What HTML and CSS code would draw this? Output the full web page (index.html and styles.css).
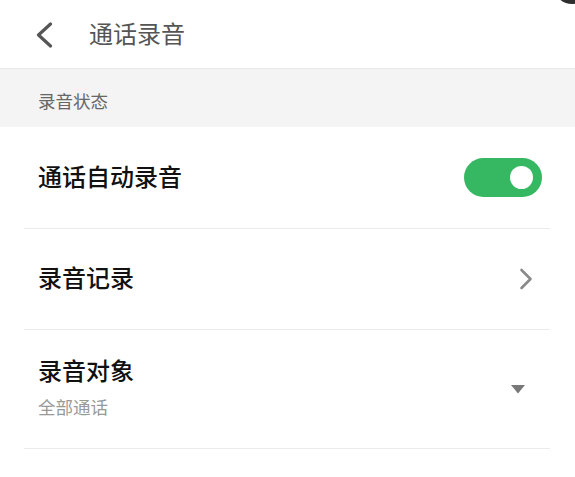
FILE: index.html
```html
<!DOCTYPE html>
<html lang="zh-CN">
<head>
<meta charset="utf-8">
<title>通话录音</title>
<link rel="stylesheet" href="styles.css">
</head>
<body>
<div class="page">
  <div class="corner-dot"></div>
  <header class="topbar">
    <svg class="back" width="18" height="26" viewBox="0 0 18 26">
      <path d="M15.5 2 L3.5 13 L15.5 24" fill="none" stroke="#565656" stroke-width="3.2" stroke-linecap="round" stroke-linejoin="round"/>
    </svg>
    <h1 class="title">通话录音</h1>
  </header>
  <div class="section-label">录音状态</div>
  <div class="list">
    <div class="row row-1">
      <span class="row-title">通话自动录音</span>
      <div class="switch"><div class="knob"></div></div>
    </div>
    <div class="row row-2">
      <span class="row-title">录音记录</span>
      <svg class="chev" width="14" height="22" viewBox="0 0 14 22">
        <path d="M2.5 2 L11.5 11 L2.5 20" fill="none" stroke="#8a8a8a" stroke-width="2.6" stroke-linecap="round" stroke-linejoin="round"/>
      </svg>
    </div>
    <div class="row row-3">
      <div class="stack">
        <span class="row-title">录音对象</span>
        <span class="row-sub">全部通话</span>
      </div>
      <svg class="tri" width="14" height="9" viewBox="0 0 14 9">
        <path d="M0 0 H14 L7 8.5 Z" fill="#787878"/>
      </svg>
    </div>
  </div>
</div>
</body>
</html>
```

FILE: styles.css
```css
html, body {
  margin: 0;
  padding: 0;
  background: #ffffff;
}
body {
  font-family: "Noto Sans CJK SC", "Noto Sans", sans-serif;
  width: 575px;
  height: 477px;
  overflow: hidden;
}
.page {
  position: relative;
  width: 575px;
  height: 477px;
  overflow: hidden;
}
.corner-dot {
  position: absolute;
  right: -14px;
  top: -26px;
  width: 34px;
  height: 30px;
  border-radius: 50%;
  background: #2f2f2f;
}
.topbar {
  height: 68px;
  border-bottom: 1px solid #e8e8e8;
  display: flex;
  align-items: center;
  padding-left: 35px;
  box-sizing: content-box;
}
.back {
  display: block;
  margin-top: 1px;
}
.title {
  margin: 0 0 2px 36px;
  font-size: 24px;
  font-weight: 400;
  color: #555555;
  line-height: 32px;
}
.section-label {
  height: 58px;
  background: #f4f4f4;
  box-sizing: border-box;
  padding: 19px 0 0 38px;
  font-size: 17.5px;
  line-height: 26px;
  color: #666666;
}
.list {
  margin: 0 25px 0 24px;
}
.row {
  display: flex;
  align-items: center;
  justify-content: space-between;
  padding-left: 14px;
  border-bottom: 1px solid #ebebeb;
}
.row-1 {
  height: 101px;
  padding-right: 8px;
}
.row-2 {
  height: 100px;
  padding-right: 17px;
}
.row-3 {
  height: 118px;
  padding-right: 25px;
}
.row-title {
  font-size: 24px;
  font-weight: 500;
  color: #111111;
  line-height: 32px;
}
.row-1 .row-title,
.row-2 .row-title,
.stack {
  margin-bottom: 4px;
}
.stack {
  display: flex;
  flex-direction: column;
  gap: 8px;
}
.row-sub {
  font-size: 17.5px;
  color: #999999;
  line-height: 26px;
}
.switch {
  width: 78px;
  height: 39px;
  border-radius: 20px;
  background: #36b862;
  display: flex;
  align-items: center;
  justify-content: flex-end;
  padding-right: 9px;
  box-sizing: border-box;
}
.knob {
  width: 23px;
  height: 23px;
  border-radius: 50%;
  background: #ffffff;
}
.chev, .tri {
  display: block;
}
```
